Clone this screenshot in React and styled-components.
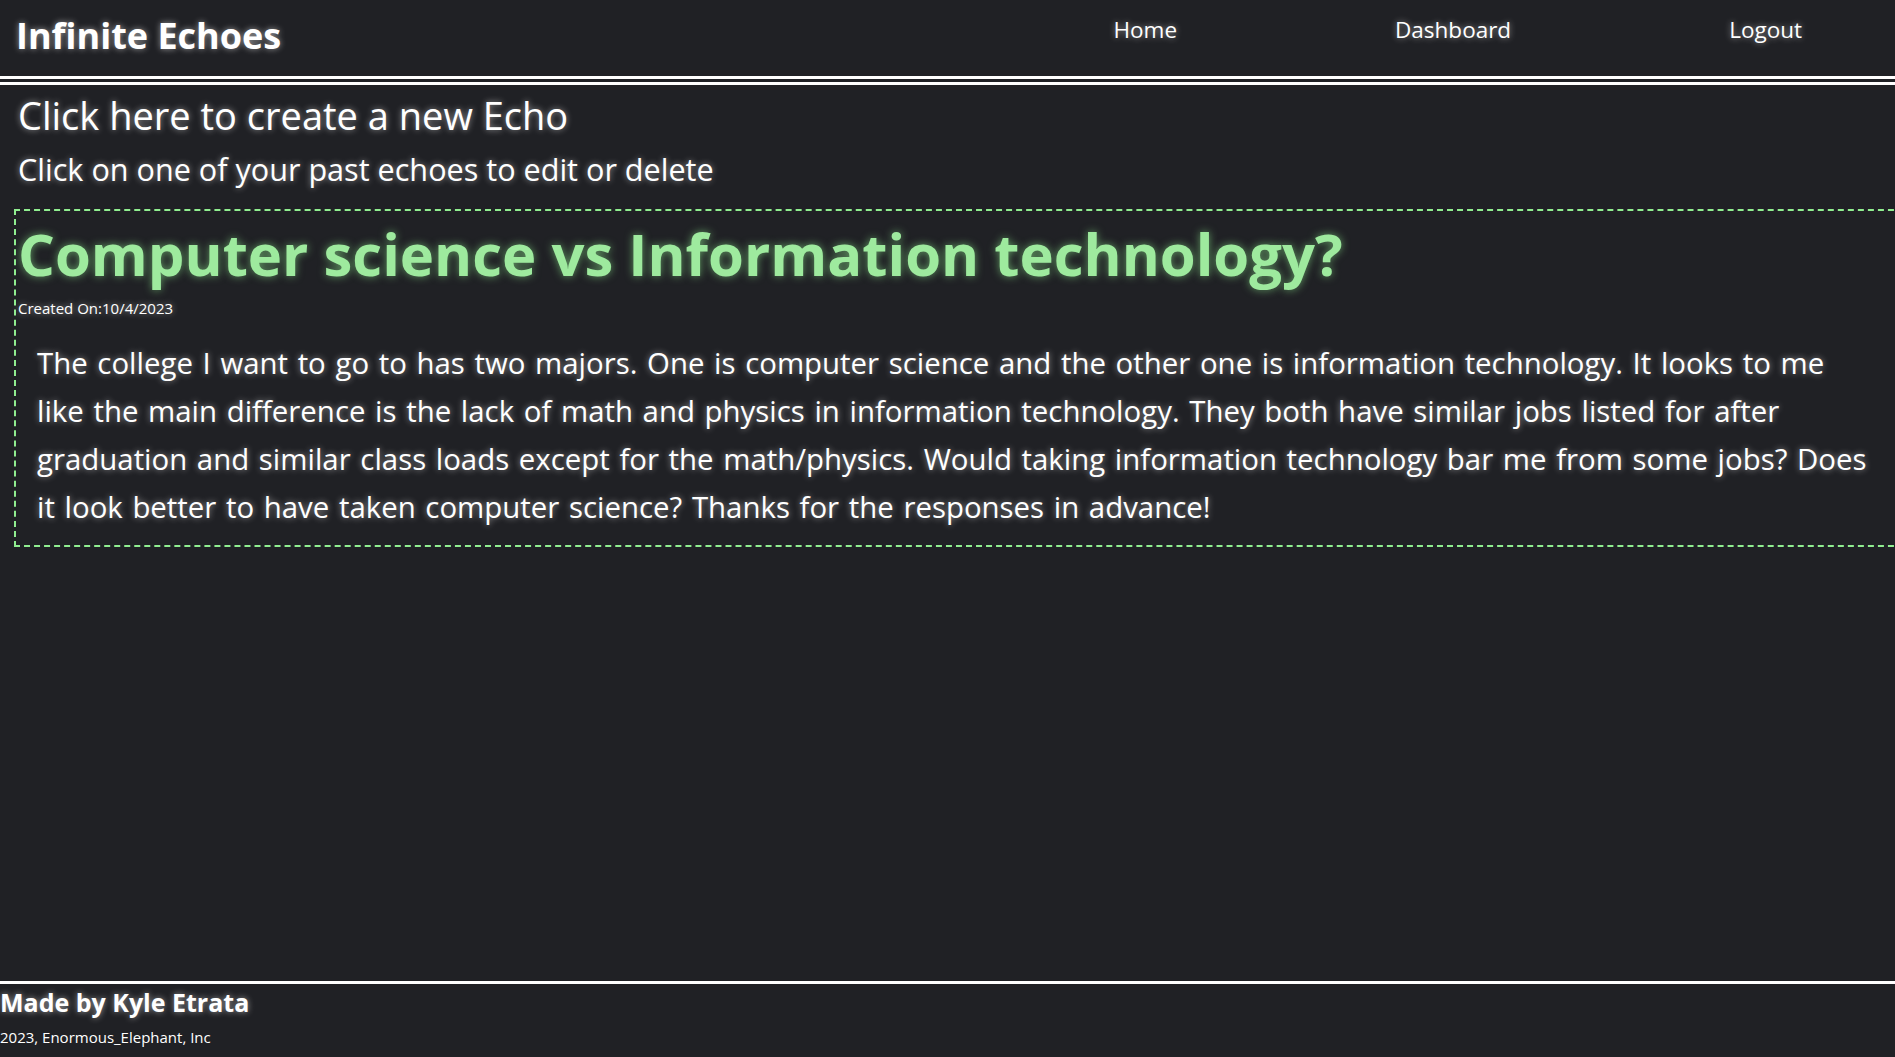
import React from "react";
import styled, { createGlobalStyle } from "styled-components";

const GlobalStyle = createGlobalStyle`
  html, body {
    margin: 0;
    padding: 0;
    background: #202125;
    color: #ffffff;
    font-family: "Open Sans", "Noto Sans", sans-serif;
    overflow-x: hidden;
  }
`;

const glow = "0 0 6px rgba(255, 255, 255, 0.55)";

const Page = styled.div`
  min-height: 100vh;
  display: flex;
  flex-direction: column;
`;

const Header = styled.header`
  height: 76px;
  display: flex;
  justify-content: space-between;
  align-items: flex-start;
  border-bottom: 9px double #ffffff;
`;

const Brand = styled.h1`
  margin: 18px 0 0 16px;
  font-size: 36px;
  line-height: 1;
  font-weight: 700;
  text-shadow: ${glow};
`;

const Nav = styled.nav`
  display: flex;
  gap: 218px;
  padding: 19px 93px 0 0;
`;

const NavLink = styled.a`
  font-size: 22.5px;
  line-height: 1;
  color: #ffffff;
  text-decoration: none;
  text-shadow: ${glow};
  cursor: pointer;
`;

const Main = styled.main`
  flex: 1;
  padding: 11px 0 0 18px;
`;

const CreateLink = styled.a`
  display: block;
  font-size: 38px;
  line-height: 1;
  color: #ffffff;
  text-decoration: none;
  text-shadow: ${glow};
  cursor: pointer;
`;

const Hint = styled.p`
  margin: 20px 0 0;
  font-size: 30.6px;
  line-height: 1;
  text-shadow: ${glow};
`;

const EchoCard = styled.article`
  margin: 24px -29px 0 -4px;
  padding: 0 21px 14px 21px;
  border: 2px dashed #90ee90;
  cursor: pointer;
`;

const EchoTitle = styled.h2`
  margin: 14px 0 0 -19px;
  font-size: 58px;
  line-height: 1;
  font-weight: 700;
  color: #9eea9e;
  text-shadow: 0 0 8px rgba(144, 238, 144, 0.6);
`;

const EchoDate = styled.p`
  margin: 18px 0 0 -19px;
  font-size: 15px;
  line-height: 1;
  text-shadow: ${glow};
`;

const EchoBody = styled.p`
  margin: 23px 27px 0 0;
  font-size: 29.4px;
  word-spacing: 2px;
  line-height: 48px;
  text-shadow: ${glow};
`;

const Footer = styled.footer`
  border-top: 3px solid #ffffff;
  padding: 6px 0 12px;
`;

const Credit = styled.h3`
  margin: 0;
  font-size: 25px;
  line-height: 1;
  font-weight: 700;
  text-shadow: ${glow};
`;

const Copy = styled.p`
  margin: 15px 0 0;
  font-size: 15px;
  line-height: 1;
`;

const echo = {
  title: "Computer science vs Information technology?",
  created: "10/4/2023",
  body:
    "The college I want to go to has two majors. One is computer science and the other one is information technology. It looks to me like the main difference is the lack of math and physics in information technology. They both have similar jobs listed for after graduation and similar class loads except for the math/physics. Would taking information technology bar me from some jobs? Does it look better to have taken computer science? Thanks for the responses in advance!",
};

export default function App() {
  return (
    <Page>
      <GlobalStyle />
      <Header>
        <Brand>Infinite Echoes</Brand>
        <Nav>
          <NavLink>Home</NavLink>
          <NavLink>Dashboard</NavLink>
          <NavLink>Logout</NavLink>
        </Nav>
      </Header>
      <Main>
        <CreateLink>Click here to create a new Echo</CreateLink>
        <Hint>Click on one of your past echoes to edit or delete</Hint>
        <EchoCard>
          <EchoTitle>{echo.title}</EchoTitle>
          <EchoDate>Created On:{echo.created}</EchoDate>
          <EchoBody>{echo.body}</EchoBody>
        </EchoCard>
      </Main>
      <Footer>
        <Credit>Made by Kyle Etrata</Credit>
        <Copy>2023, Enormous_Elephant, Inc</Copy>
      </Footer>
    </Page>
  );
}
